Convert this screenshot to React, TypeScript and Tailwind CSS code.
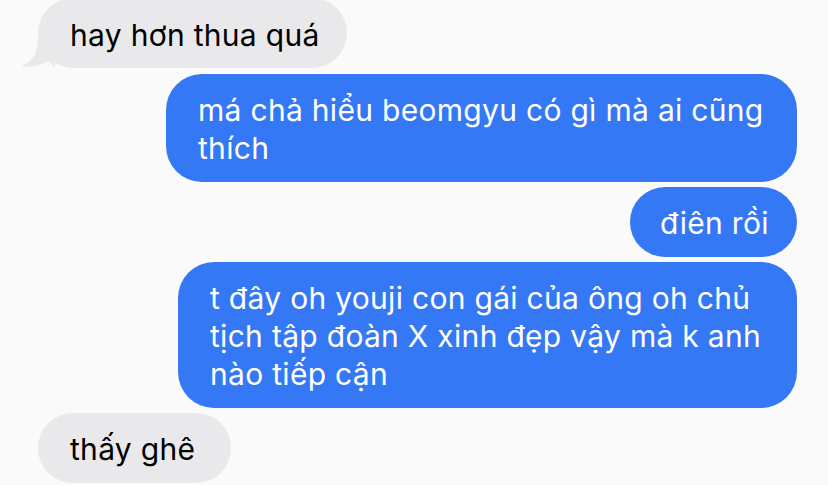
export default function App() {
  const font = { fontFamily: "Inter, 'Noto Sans', sans-serif" };
  return (
    <div
      className="w-[828px] h-[485px] overflow-hidden bg-[#fafafa] flex flex-col gap-[5px] pl-[38px] pr-[31px]"
      style={font}
    >
      {/* incoming */}
      <div className="relative self-start -mt-[2px] mb-[1px]">
        <svg
          className="absolute left-[-17px] bottom-[0px]"
          width="34"
          height="30"
          viewBox="0 0 34 30"
        >
          <path d="M17 0 C17 14 12 24 0 28.5 C10 29.5 20 27.5 28 23 L34 30 L34 0 Z" fill="#e9e9eb" />
        </svg>
        <div className="relative w-[309px] bg-[#e9e9eb] text-black rounded-[35px] px-[32px] pt-[18px] pb-[14px] text-[30px] leading-[38px] tracking-[0.3px] whitespace-nowrap">
          hay hơn thua quá
        </div>
      </div>

      {/* outgoing */}
      <div className="self-end bg-[#3478f6] text-white rounded-[36px] pl-[32px] pr-[20px] pt-[17px] pb-[15px] text-[30px] leading-[38px] w-[631px] tracking-[0.3px] whitespace-nowrap">
        má chả hiểu beomgyu có gì mà ai cũng
        <br />
        thích
      </div>
      <div className="self-end w-[167px] bg-[#3478f6] text-white rounded-[35px] pl-[30px] pt-[17px] pb-[15px] text-[30px] leading-[38px] tracking-[0.3px] whitespace-nowrap">
        điên rồi
      </div>
      <div className="self-end bg-[#3478f6] text-white rounded-[36px] pl-[32px] pr-[20px] pt-[17px] pb-[15px] text-[30px] leading-[38px] w-[619px] tracking-[0.3px] whitespace-nowrap">
        t đây oh youji con gái của ông oh chủ
        <br />
        tịch tập đoàn X xinh đẹp vậy mà k anh
        <br />
        nào tiếp cận
      </div>

      {/* incoming */}
      <div className="self-start w-[193px] bg-[#e9e9eb] text-black rounded-[35px] px-[32px] pt-[17px] pb-[15px] text-[30px] leading-[38px] tracking-[0.3px] whitespace-nowrap">
        thấy ghê
      </div>
    </div>
  );
}
